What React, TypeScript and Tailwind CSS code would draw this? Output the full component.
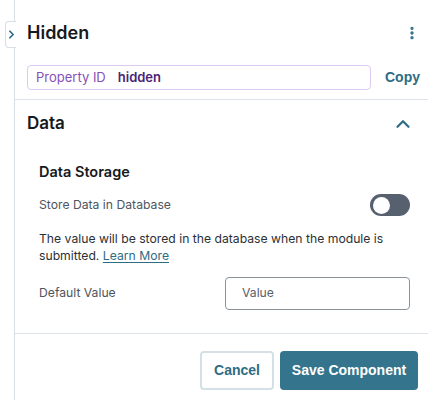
import { ChevronRight, ChevronUp, EllipsisVertical } from "lucide-react";

const font = { fontFamily: "Inter, 'Noto Sans', sans-serif" };

export default function App() {
  return (
    <div
      className="relative w-[428px] h-[400px] bg-white overflow-hidden text-[#1f2329]"
      style={font}
    >
      {/* collapse tab */}
      <div className="absolute left-[5px] top-[21px] w-[11px] h-[27px] bg-white border border-r-0 border-[#d7dee5] rounded-l-[4px] flex items-center justify-center z-10">
        <ChevronRight className="w-[13px] h-[13px] shrink-0 text-[#2e6c84]" strokeWidth={3.2} />
      </div>

      <div className="ml-[14px] h-full border-l border-[#d7dee5] flex flex-col">
        {/* header */}
        <div className="pl-[12px] pr-[8px] pt-[21px] pb-[9px] border-b border-[#dde3e9]">
          <div className="flex items-center justify-between h-[24px]">
            <h1 className="text-[18px] font-semibold leading-[24px] text-[#16191d]">Hidden</h1>
            <EllipsisVertical className="w-[16px] h-[16px] text-[#2e6c84]" strokeWidth={3} />
          </div>
          <div className="mt-[20px] flex items-center">
            <div className="w-[347px] h-[25px] border border-[#dccbef] rounded-[4px] flex items-center px-[8px] text-[13px]">
              <span className="text-[#8750b8]">Property ID</span>
              <span className="ml-[12px] font-semibold text-[#4b2577]">hidden</span>
            </div>
            <button
              className="ml-[14px] text-[14px] font-bold text-[#2e6c84]"
              style={{ fontFamily: "'Liberation Sans', Arial, sans-serif" }}
            >
              Copy
            </button>
          </div>
        </div>

        {/* data section */}
        <div className="pl-[12px] pr-[16px] pt-[12px] pb-[23px] border-b border-[#dde3e9]">
          <div className="flex items-center justify-between h-[24px]">
            <h2 className="text-[17px] font-semibold text-[#16191d]">Data</h2>
            <ChevronUp className="w-[22px] h-[22px] -mr-[2px] text-[#2e6c84]" strokeWidth={2.4} />
          </div>
          <div className="pl-[12px] pr-[2px]">
            <h3 className="mt-[26px] text-[14.5px] font-semibold leading-[20px] text-[#16191d]">
              Data Storage
            </h3>
            <div className="mt-[12px] h-[22px] flex items-center justify-between">
              <span className="text-[12.2px] text-[#4e5560]">Store Data in Database</span>
              <div className="w-[40px] h-[22px] rounded-full bg-[#56606e] flex items-center pl-[3px]">
                <div className="w-[17px] h-[17px] rounded-full bg-white" />
              </div>
            </div>
            <p className="mt-[14px] text-[12.2px] leading-[17px] text-[#2b3036]">
              The value will be stored in the database when the module is submitted.{" "}
              <a className="text-[#2e6c84] underline underline-offset-2">Learn More</a>
            </p>
            <div className="mt-[13px] flex items-center justify-between">
              <span className="text-[12.2px] text-[#4e5560]">Default Value</span>
              <div className="w-[185px] h-[33px] border border-[#8b939c] rounded-[4px] flex items-center px-[16px] text-[12.2px] text-[#5a616a]">
                Value
              </div>
            </div>
          </div>
        </div>

        {/* footer */}
        <div
          className="flex justify-end gap-[6px] pr-[10px] pt-[17px]"
          style={{ fontFamily: "'Liberation Sans', Arial, sans-serif" }}
        >
          <button className="w-[74px] h-[39px] border-2 border-[#d3e0e6] rounded-[4px] text-[14px] font-bold text-[#2e6c84]">
            Cancel
          </button>
          <button className="w-[138px] h-[39px] rounded-[4px] bg-[#34748c] text-[14px] font-bold text-white">
            Save Component
          </button>
        </div>
      </div>
    </div>
  );
}
